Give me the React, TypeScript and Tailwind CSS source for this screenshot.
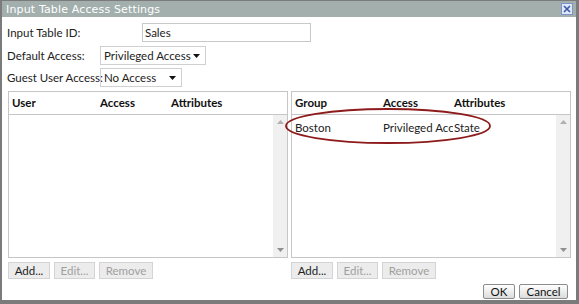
import React from "react";

const font = { fontFamily: 'Lato, "Open Sans", sans-serif' };

function Arrow() {
  return (
    <svg width="7" height="4" viewBox="0 0 7 4" className="shrink-0">
      <path d="M0 0h7L3.5 4z" fill="#111" />
    </svg>
  );
}

function Btn({ label, disabled, w }: { label: string; disabled?: boolean; w: string }) {
  return (
    <div
      className={`${w} h-[17px] flex items-center justify-center border border-[#d4d4d4] bg-[#ececec] text-[11.5px] leading-none ${
        disabled ? "text-[#a0a0a0]" : "text-[#222]"
      }`}
    >
      {label}
    </div>
  );
}

function Scroll() {
  return (
    <div className="w-[14px] bg-[#f0f0f0] flex flex-col justify-between items-center py-[5px]">
      <svg width="7" height="4" viewBox="0 0 7 4">
        <path d="M3.5 0L7 4H0z" fill="#b0b0b0" />
      </svg>
      <svg width="7" height="4" viewBox="0 0 7 4">
        <path d="M0 0h7L3.5 4z" fill="#909090" />
      </svg>
    </div>
  );
}

function Panel({
  cols,
  row,
}: {
  cols: [string, string, string];
  row?: [string, string, string];
}) {
  return (
    <div className="w-[280px] h-[167px] border border-[#c6c6c6] flex flex-col bg-white">
      <div className="h-[23px] flex items-center border-b border-[#c6c6c6] font-bold text-[11.5px] text-[#111] pl-[3px]">
        <div className="w-[88px]">{cols[0]}</div>
        <div className="w-[71px]">{cols[1]}</div>
        <div>{cols[2]}</div>
      </div>
      <div className="flex-1 flex">
        <div className="flex-1 pl-[3px] pt-[4px] text-[11.5px] text-[#222]">
          {row && (
            <div className="flex whitespace-nowrap">
              <div className="w-[88px]">{row[0]}</div>
              <div className="w-[70px] mr-[1px] overflow-hidden">{row[1]}</div>
              <div>{row[2]}</div>
            </div>
          )}
        </div>
        <Scroll />
      </div>
    </div>
  );
}

export default function App() {
  return (
    <div
      className="w-[579px] h-[304px] bg-[#7b7b7b] pl-[2px] pt-[1px] pr-[3px] pb-[4px]"
      style={font}
    >
      <div className="w-full h-full flex flex-col bg-white">
        <div className="h-[16px] bg-[#a2afad] flex items-center justify-between pl-[4px] pr-[3px]">
          <span
            className="text-white leading-none"
            style={{ fontFamily: '"DejaVu Sans", sans-serif', fontSize: "11px", letterSpacing: "0.15px" }}
          >
            Input Table Access Settings
          </span>
          <div className="w-[12px] h-[12px] border border-[#7f95c8] bg-[#dfe8fa] flex items-center justify-center">
            <svg width="8" height="8" viewBox="0 0 8 8">
              <path d="M1 1L7 7M7 1L1 7" stroke="#3a56a8" strokeWidth="1.6" />
            </svg>
          </div>
        </div>
        <div className="flex-1 flex flex-col px-[5px] pt-[6px] text-[11.5px] text-[#222]">
          <div className="flex items-center h-[19px]">
            <span className="w-[135px]">Input Table ID:</span>
            <div className="w-[169px] h-[19px] border border-[#c8c8c8] flex items-center pl-[2px]">Sales</div>
          </div>
          <div className="flex items-center h-[19px] mt-[4px]">
            <span className="w-[93px]">Default Access:</span>
            <div className="w-[106px] h-[19px] border border-[#d0d0d0] flex items-center justify-between pl-[3px] pr-[5px]">
              <span className="whitespace-nowrap">Privileged Access</span>
              <Arrow />
            </div>
          </div>
          <div className="flex items-center h-[19px] mt-[3px]">
            <span className="w-[93px] whitespace-nowrap">Guest User Access:</span>
            <div className="w-[82px] h-[19px] border border-[#d0d0d0] flex items-center justify-between pl-[3px] pr-[5px]">
              <span className="whitespace-nowrap">No Access</span>
              <Arrow />
            </div>
          </div>
          <div className="flex gap-[3px] mt-[4px] pl-[1px]">
            <div className="flex flex-col">
              <Panel cols={["User", "Access", "Attributes"]} />
              <div className="flex gap-[4px] mt-[4px]">
                <Btn label="Add..." w="w-[42px]" />
                <Btn label="Edit..." disabled w="w-[41px]" />
                <Btn label="Remove" disabled w="w-[54px]" />
              </div>
            </div>
            <div className="flex flex-col relative">
              <Panel
                cols={["Group", "Access", "Attributes"]}
                row={["Boston", "Privileged Access", "State"]}
              />
              <svg
                className="absolute left-[-6px] top-[16px] pointer-events-none"
                width="210"
                height="38"
                viewBox="0 0 210 38"
              >
                <ellipse cx="103" cy="19" rx="102" ry="17" fill="none" stroke="#8e1b1b" strokeWidth="1.8" />
              </svg>
              <div className="flex gap-[4px] mt-[4px]">
                <Btn label="Add..." w="w-[42px]" />
                <Btn label="Edit..." disabled w="w-[41px]" />
                <Btn label="Remove" disabled w="w-[54px]" />
              </div>
              <div className="flex justify-end gap-[4px] mt-[5px] pr-[3px]">
                <div className="w-[32px] h-[15px] border border-[#8c8c8c] rounded-[2px] bg-gradient-to-b from-white to-[#dcdcdc] flex items-center justify-center text-[11.5px] leading-none text-[#111]">
                  OK
                </div>
                <div className="w-[49px] h-[15px] border border-[#8c8c8c] rounded-[2px] bg-gradient-to-b from-white to-[#dcdcdc] flex items-center justify-center text-[11.5px] leading-none text-[#111]">
                  Cancel
                </div>
              </div>
            </div>
          </div>
        </div>
      </div>
    </div>
  );
}
